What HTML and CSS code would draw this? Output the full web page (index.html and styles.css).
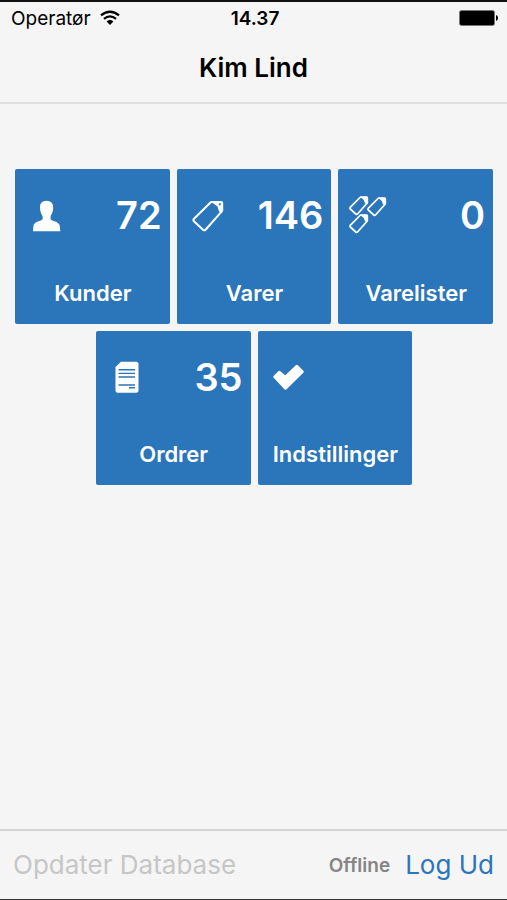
FILE: index.html
```html
<!DOCTYPE html>
<html lang="da">
<head>
<meta charset="utf-8">
<meta name="viewport" content="width=device-width, initial-scale=1">
<title>Kim Lind</title>
<link rel="stylesheet" href="styles.css">
</head>
<body>
<header class="header">
  <div class="status">
    <div class="carrier">
      <span>Operatør</span>
      <svg class="wifi" viewBox="0 0 20 16" aria-hidden="true">
        <path d="M1 5.400Q10-2 19 5.400M4 8.800Q10 4 16 8.800" fill="none" stroke="currentColor" stroke-width="2.300"/>
        <path d="M6.600 11.400Q10 8.600 13.400 11.400L10 15Z" fill="currentColor"/>
      </svg>
    </div>
    <time class="clock">14.37</time>
    <svg class="battery" viewBox="0 0 40 16" role="img" aria-label="Batteri">
      <rect x="0.500" y="0.500" width="35" height="15" rx="2" fill="#000" stroke="#777"/>
      <path d="M37 5Q39 5.500 39 8T37 11Z" fill="#000"/>
    </svg>
  </div>
  <h1 class="title">Kim Lind</h1>
</header>

<main class="tiles">
  <button class="tile" type="button">
    <span class="tile-top">
      <svg class="icon" viewBox="0 0 44 44" aria-hidden="true">
        <path d="M22.500 7.700C27 7.700 29.500 10.500 29.200 15.200C29 19 27.500 21.500 26.600 23V26.500C29 28.300 35.200 28.600 35.800 33L36.300 38.300H9L9.400 33C10 28.600 16 28.300 18.600 26.500V23C17.500 21.500 16.200 19 16 15.200C15.700 10.500 18 7.700 22.500 7.700Z" fill="currentColor"/>
      </svg>
      <span class="count">72</span>
    </span>
    <span class="label">Kunder</span>
  </button>
  <button class="tile" type="button">
    <span class="tile-top">
      <svg class="icon" viewBox="0 0 44 44" aria-hidden="true">
        <path d="M25 9H35.300Q36.200 9 36.200 10V17.800L19.800 36.500Q18.500 38 17 36.700L8.200 28.600Q6.700 27.200 8 25.800Z" fill="none" stroke="currentColor" stroke-width="2" stroke-linejoin="round"/>
        <path d="M25 8.800H36V19.500L33 18.500L31.500 13.500Z" fill="currentColor"/>
        <circle cx="33.800" cy="11.300" r="1.100" class="hole"/>
      </svg>
      <span class="count">146</span>
    </span>
    <span class="label">Varer</span>
  </button>
  <button class="tile" type="button">
    <span class="tile-top">
      <svg class="icon" viewBox="0 0 44 44" aria-hidden="true">
        <defs>
          <g id="small-tag">
            <path d="M11.500 1H17.500Q18.300 1 18.300 2V7L8.500 18Q7.700 18.800 6.800 18L1.300 13Q.5 12.200 1.200 11.300Z" fill="none" stroke="currentColor" stroke-width="1.700" stroke-linejoin="round"/>
            <path d="M11 .8H18.500V8L16 7.500L14.800 4Z" fill="currentColor"/>
          </g>
        </defs>
        <use href="#small-tag" x="2" y="3"/>
        <use href="#small-tag" x="20" y="4"/>
        <use href="#small-tag" x="2" y="21"/>
      </svg>
      <span class="count">0</span>
    </span>
    <span class="label">Varelister</span>
  </button>
  <button class="tile tile-offset" type="button">
    <span class="tile-top">
      <svg class="icon" viewBox="0 0 44 44" aria-hidden="true">
        <path d="M16 6.700H31Q33.500 6.700 33.500 9.200V35.200Q33.500 37.700 31 37.700H13Q10.500 37.700 10.500 35.200V12Z" fill="currentColor"/>
        <path d="M13.500 14.800H30M13.500 18.400H30M13.500 22H30M13.500 30H30M24 32.800H30" fill="none" class="rule"/>
      </svg>
      <span class="count">35</span>
    </span>
    <span class="label">Ordrer</span>
  </button>
  <button class="tile" type="button">
    <span class="tile-top">
      <svg class="icon" viewBox="0 0 44 44" aria-hidden="true">
        <path d="M7.800 21.800L12.400 17.300L18.300 22.300L29.800 11.300L35.300 16.800L18.500 33.200Z" fill="currentColor" stroke="currentColor" stroke-width="3" stroke-linejoin="round"/>
      </svg>
    </span>
    <span class="label">Indstillinger</span>
  </button>
</main>

<footer class="toolbar">
  <button class="update" type="button" disabled>Opdater Database</button>
  <span class="connection">Offline</span>
  <button class="logout" type="button">Log Ud</button>
</footer>
</body>
</html>
```
FILE: styles.css
```css
* {
  box-sizing: border-box;
}

body {
  margin: 0;
  min-height: 100vh;
  display: flex;
  flex-direction: column;
  background: #f5f5f5;
  color: #000;
  font-family: Inter, "Liberation Sans", sans-serif;
  border-top: 2px solid #111;
  border-bottom: 1px solid #333;
}

button {
  margin: 0;
  padding: 0;
  border: 0;
  background: none;
  font: inherit;
}

.header {
  border-bottom: 2px solid #e0e0e0;
}

.status {
  display: grid;
  grid-template-columns: 1fr auto 1fr;
  align-items: center;
  height: 32px;
  padding: 0 8px 0 11px;
  font-size: 19px;
}

.carrier {
  display: flex;
  align-items: center;
  gap: 9px;
}

.wifi {
  width: 20px;
  height: 16px;
}

.clock {
  font-weight: 600;
}

.battery {
  width: 40px;
  height: 16px;
  justify-self: end;
}

.title {
  margin: 0;
  padding: 17px 0;
  font-size: 26px;
  line-height: 34px;
  font-weight: 600;
  text-align: center;
}

.tiles {
  flex: 1;
  display: grid;
  grid-template-columns: repeat(6, 1fr);
  align-content: start;
  gap: 7px;
  padding: 65px 14px 24px 15px;
}

.tile {
  grid-column: span 2;
  aspect-ratio: 1;
  display: flex;
  flex-direction: column;
  justify-content: space-between;
  padding: 24px 8px 17px 9px;
  border-radius: 2px;
  background: #2b75bb;
  color: #fff;
  cursor: pointer;
}

.tile-offset {
  grid-column: 2 / span 2;
}

.tile-top {
  display: flex;
  align-items: center;
  justify-content: space-between;
}

.icon {
  width: 44px;
  height: 44px;
}

.hole {
  fill: #2b75bb;
}

.rule {
  stroke: #2b75bb;
  stroke-width: 1.4;
}

.count {
  font-size: 38px;
  line-height: 44px;
  font-weight: 600;
}

.label {
  font-size: 22px;
  line-height: 28px;
  font-weight: 600;
  text-align: center;
}

.toolbar {
  display: flex;
  align-items: center;
  height: 70px;
  padding: 0 13px;
  border-top: 2px solid #d4d4d4;
}

.update,
.logout {
  font-size: 26px;
  line-height: 34px;
}

.update {
  color: #c6c6c6;
}

.connection {
  margin: 0 15px 0 auto;
  color: #858585;
  font-size: 19px;
  font-weight: 600;
}

.logout {
  color: #2b75bb;
  cursor: pointer;
}
```
